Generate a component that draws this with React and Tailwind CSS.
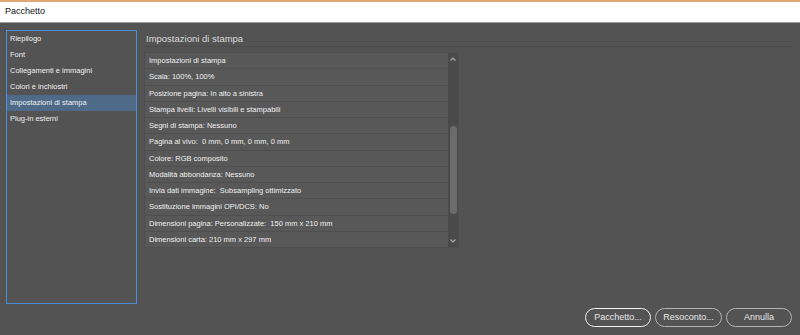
import React from "react";

const rows = [
  "Impostazioni di stampa",
  "Scala: 100%, 100%",
  "Posizione pagina: In alto a sinistra",
  "Stampa livelli: Livelli visibili e stampabili",
  "Segni di stampa: Nessuno",
  "Pagina al vivo:  0 mm, 0 mm, 0 mm, 0 mm",
  "Colore: RGB composito",
  "Modalità abbondanza: Nessuno",
  "Invia dati immagine:  Subsampling ottimizzato",
  "Sostituzione immagini OPI/DCS: No",
  "Dimensioni pagina: Personalizzate:  150 mm x 210 mm",
  "Dimensioni carta: 210 mm x 297 mm",
];

const items = [
  "Riepilogo",
  "Font",
  "Collegamenti e immagini",
  "Colori e inchiostri",
  "Impostazioni di stampa",
  "Plug-in esterni",
];

export default function App() {
  return (
    <div
      className="w-[800px] h-[335px] flex flex-col bg-[#535353] overflow-hidden"
      style={{ fontFamily: '"Liberation Sans", Arial, sans-serif' }}
    >
      <div className="h-[2px] bg-[#dca774]" />
      <div className="h-[21px] bg-white flex items-center pl-[5px] text-[9px] text-[#111] border-b border-[#9c9c9c]">
        Pacchetto
      </div>
      <div className="flex-1 flex pt-[7px]">
        <div className="ml-[6px] w-[131px] h-[274px] border border-[#4b8fd6] flex flex-col">
          {items.map((it, i) => (
            <div
              key={it}
              className={
                "h-[16px] flex items-center pl-[3px] text-[7.5px] text-[#f0f0f0] " +
                (i === 4 ? "bg-[#4e6a88]" : "")
              }
            >
              {it}
            </div>
          ))}
        </div>
        <div className="ml-[7px] flex-1 mr-[8px] pt-[1px] flex flex-col">
          <div className="h-[16px] pt-[2px] flex items-center pl-[2px] text-[9.5px] text-[#dadada] border-b border-[#4a4a4a]">
            Impostazioni di stampa
          </div>
          <div className="mt-[5px] w-[315px] h-[196px] bg-[#4e4e4e] p-[1px] flex">
            <div className="flex-1 flex flex-col gap-[1px]">
              {rows.map((r) => (
                <div
                  key={r}
                  className="h-[15.25px] bg-[#585858] flex items-center pl-[4px] text-[7.5px] text-[#f0f0f0] whitespace-pre"
                >
                  {r}
                </div>
              ))}
            </div>
            <div className="w-[10px] bg-[#4a4a4a] flex flex-col items-center">
              <svg width="8" height="8" viewBox="0 0 8 8" className="mt-[2px]">
                <path d="M1.5 5.5 L4 3 L6.5 5.5" stroke="#a8a8a8" strokeWidth="1.2" fill="none" />
              </svg>
              <div className="mt-[63px] w-[7px] h-[88px] rounded-[4px] bg-[#6b6b6b]" />
              <div className="flex-1" />
              <svg width="8" height="8" viewBox="0 0 8 8" className="mb-[2px]">
                <path d="M1.5 2.5 L4 5 L6.5 2.5" stroke="#a8a8a8" strokeWidth="1.2" fill="none" />
              </svg>
            </div>
          </div>
          <div className="flex-1" />
          <div className="flex justify-end gap-[4px] mb-[8px]">
            <button className="w-[66px] h-[19px] rounded-full border-[1.5px] border-[#f4f4f4] text-[9px] text-[#e8e8e8] flex items-center justify-center">
              Pacchetto...
            </button>
            <button className="w-[67px] h-[19px] rounded-full border border-[#b4b4b4] text-[9px] text-[#e8e8e8] flex items-center justify-center">
              Resoconto...
            </button>
            <button className="w-[66px] h-[19px] rounded-full border border-[#b4b4b4] text-[9px] text-[#e8e8e8] flex items-center justify-center">
              Annulla
            </button>
          </div>
        </div>
      </div>
    </div>
  );
}
